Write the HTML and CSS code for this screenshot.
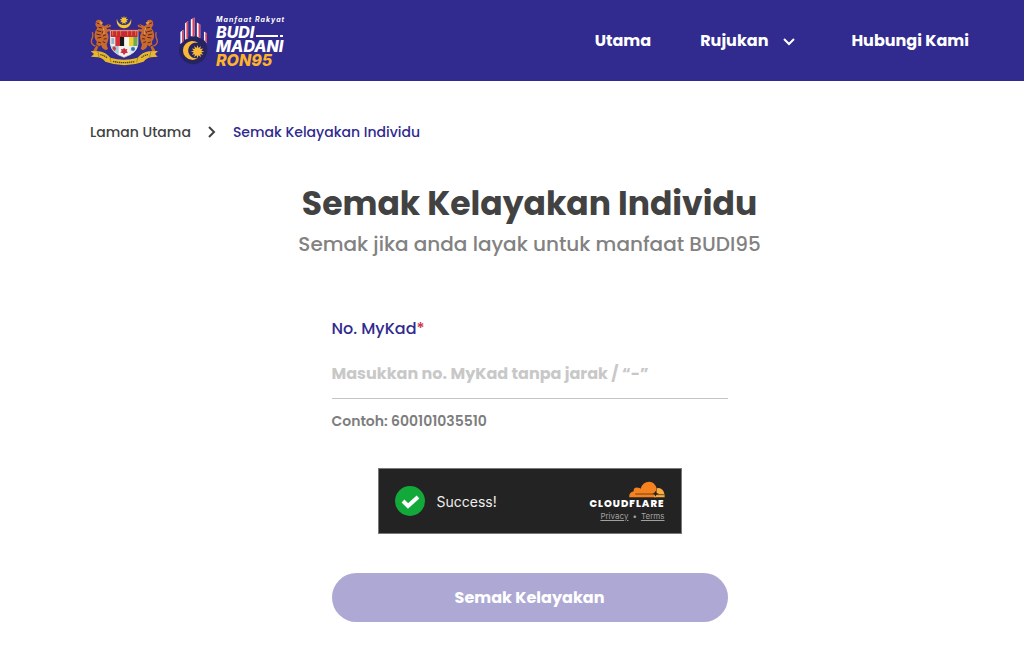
FILE: index.html
```html
<!DOCTYPE html>
<html lang="ms">
<head>
<meta charset="UTF-8">
<meta name="viewport" content="width=device-width, initial-scale=1">
<title>Semak Kelayakan Individu</title>
<link rel="stylesheet" href="styles.css">
</head>
<body>
<header class="header">
	<div class="brand">
		<svg class="jata" viewBox="30 32 207 162" role="img" aria-label="Jata Negara">
			<!-- crescent and star -->
			<path d="M111 46a22 22 0 1 0 42 0a21 19 0 1 1-42 0z" fill="#f3c62c"/>
			<path d="M132 37l2 7 6-4-2 7 7 1-6 4 4 5-6-1-1 7-4-5-5 5 0-7-7 1 5-5-6-4 7-1-2-7 6 4z" fill="#f3c62c"/>
			<!-- tigers -->
			<g id="tiger">
				<path d="M48 53l6-4 8 1 6 8-2 6 7 4 12-5 8 2-1 5-12 4 1 4 10-1 3 5-13 4q8 12 3 26l-4 12 4 13-7 4-10-7-4-9-9 7-5 14-10 1 2-8 8-12 1-13q-8-9-6-22 1-10 8-18l-6-9z" fill="#c8692f"/>
				<path d="M46 128q-15-5-11-20 6-10 2-21" stroke="#c8692f" stroke-width="4" fill="none"/>
				<path d="M50 58l8 4M56 72l12 2M50 82l14 3M49 92l13 3M52 104l12-2M70 82l-4 8M78 94l-9 4M80 106l-9 1M76 118l-8-3M54 116l9 3M50 126l6 3M88 64l-4 4" stroke="#5a211b" stroke-width="3" fill="none"/>
				<path d="M60 56l7 2-3 5zM68 72q5 8 4 20" stroke="#f0bd7c" stroke-width="2" fill="none"/>
			</g>
			<use href="#tiger" transform="matrix(-1 0 0 1 266 0)"/>
			<!-- shield -->
			<path d="M91 82h83v40q-3 27-42 40-37-13-41-40z" fill="#f4f1ed"/>
			<path d="M91 79h83v22H91z" fill="#c92735"/>
			<path d="M98 82v15M110 82v15M122 82v15M143 82v15M155 82v15M167 82v15" stroke="#d9772f" stroke-width="3"/>
			<path d="M91 101h15v27H92z" fill="#f2efe7"/>
			<path d="M94 107h9M94 113h9M94 119h9" stroke="#357ebd" stroke-width="3"/>
			<path d="M106 101h14v27h-14z" fill="#d92d36"/>
			<path d="M120 101h13v27h-13z" fill="#171817"/>
			<path d="M133 101h14v27h-14z" fill="#f6f6f0"/>
			<path d="M147 101h13v27h-13z" fill="#f2cf2b"/>
			<path d="M160 101h14l-1 27h-13z" fill="#6eaa50"/>
			<path d="M92 128h24v27q-21-11-24-27z" fill="#a7c9dd"/>
			<path d="M98 132l5-3 6 6-5 9-7-6z" fill="#c4413d"/>
			<path d="M149 128h24q-3 17-24 27z" fill="#dbe7ed"/>
			<circle cx="159" cy="137" r="6" fill="#326eb1"/>
			<path d="M132 133l4 5 6-1-2 6 4 5-7 1-5 6-4-6-7-1 4-5-2-6 6 1z" fill="#cf2a3d"/>
			<path d="M91 82h83v40q-3 27-42 40-37-13-41-40z" fill="none" stroke="#e8dcd0" stroke-width="2"/>
			<!-- motto ribbon -->
			<path d="M32 143l25 1q20 3 34 19 40 12 82 0 14-16 34-19l27-1-9 9 8 8-20 2q-14 2-22 13-58 21-115 0-8-11-22-13l-21-2 9-8z" fill="#e6b82f"/>
			<path d="M91 163l2 14M173 163l-3 14M54 145l3 16M212 145l-3 16" stroke="#8e711f" stroke-width="2"/>
			<path d="M99 174q35 8 66 0M61 154q10 1 20 9M204 154q-11 1-20 9" fill="none" stroke="#4c4325" stroke-width="4" stroke-dasharray="4 2"/>
		</svg>
		<div class="budi">
			<svg class="budi-mark" viewBox="27 36 86 142" aria-hidden="true">
				<circle cx="69" cy="134" r="42" fill="#262460"/>
				<path d="M31 80l9-6v34l-9 9zM45 54l9-6v51l-9 4zM62 43l11-6v56H62zM80 52l10 6v41l-10-5zM101 79l9 6v29l-9-10z" fill="#f4f2fa"/>
				<path d="M36 77l4-3v34l-4 4zM49 51l5-3v51l-5 2zM67 40l6-3v56h-6zM85 55l5 3v41l-5-3zM105 82l5 3v29l-5-6z" fill="#d74455"/>
				<path d="M84 113a28 28 0 1 0 0 44 23 23 0 1 1 0-44z" fill="#f9b936"/>
				<path d="M82 119l3 9 7-6-2 9 9-2-6 7 9 2-9 3 6 7-9-2 2 9-7-6-3 9-3-9-7 6 2-9-9 2 6-7-9-3 9-2-6-7 9 2-2-9 7 6z" fill="#f9b936"/>
			</svg>
			<div class="budi-text">
				<span class="tagline">Manfaat Rakyat</span>
				<span class="budi-line">BUDI<i class="dash"></i><i class="dot"></i></span>
				<span class="budi-line">MADANI</span>
				<span class="budi-line ron">RON95</span>
			</div>
		</div>
	</div>
	<nav class="nav">
		<a href="#">Utama</a>
		<button type="button" class="nav-drop">Rujukan
			<svg class="chevron" viewBox="0 0 14 14" aria-hidden="true"><path d="M2 5l5 5 5-5"/></svg>
		</button>
		<a href="#">Hubungi Kami</a>
	</nav>
</header>

<main class="content">
	<nav class="breadcrumb" aria-label="Breadcrumb">
		<a href="#">Laman Utama</a>
		<svg class="separator" viewBox="0 0 10 14" aria-hidden="true"><path d="M2 2l5 5-5 5"/></svg>
		<a href="#" class="current">Semak Kelayakan Individu</a>
	</nav>

	<h1>Semak Kelayakan Individu</h1>
	<p class="subtitle">Semak jika anda layak untuk manfaat BUDI95</p>

	<form class="check-form">
		<label for="mykad">No. MyKad<span class="required">*</span></label>
		<input type="text" id="mykad" placeholder="Masukkan no. MyKad tanpa jarak / “-”">
		<p class="hint">Contoh: 600101035510</p>

		<div class="turnstile">
			<svg class="tick" viewBox="0 0 30 30" aria-hidden="true">
				<circle cx="15" cy="15" r="15" fill="#13a83a"/>
				<path d="M8 15l5 5 10-9" fill="none" stroke="#fff" stroke-width="4"/>
			</svg>
			<span class="status">Success!</span>
			<div class="cloudflare">
				<svg class="cloud" viewBox="0 0 108 49" aria-hidden="true">
					<path d="M1 48q-2-15 13-18-1-13 13-11 6 0 8 3Q41 1 61 1q16 1 22 20l-2 27z" fill="#f6821f"/>
					<path d="M84 21q9-3 16 4 7 7 7 23H75l1-8 7-4z" fill="#fbad41"/>
					<path d="M19 38h53q6-1 8-8M77 40h28" fill="none" stroke="#232323" stroke-width="2"/>
					<path d="M80 28l2 7 8 2-8 3-3 6-2-6-7-2 7-3z" fill="#232323"/>
				</svg>
				<span class="cf-name">CLOUDFLARE</span>
				<div class="cf-links"><a href="#">Privacy</a><span>•</span><a href="#">Terms</a></div>
			</div>
		</div>

		<button type="submit" class="submit" disabled>Semak Kelayakan</button>
	</form>
</main>
</body>
</html>
```
FILE: styles.css
```css
* {
	box-sizing: border-box;
}
body {
	margin: 0;
	background: #fff;
	color: #424242;
	font-family: Poppins, Inter, "Liberation Sans", sans-serif;
}
a {
	color: inherit;
	text-decoration: none;
}
svg {
	display: block;
	flex-shrink: 0;
}

/* header */
.header {
	display: flex;
	justify-content: space-between;
	align-items: center;
	min-height: 81px;
	padding: 0 55px 0 90px;
	background: #312a8f;
	color: #fff;
}
.brand {
	display: flex;
	align-items: center;
	gap: 20px;
}
.jata {
	width: 69px;
	height: 54px;
}
.budi {
	display: flex;
	align-items: center;
	gap: 8px;
}
.budi-mark {
	width: 29px;
	height: 48px;
}
.budi-text {
	display: flex;
	flex-direction: column;
	font-family: Inter, "Liberation Sans", sans-serif;
	font-style: italic;
	font-weight: 800;
}
.tagline {
	font-size: 7px;
	line-height: 10px;
	letter-spacing: 1px;
	font-weight: 700;
}
.budi-line {
	display: flex;
	align-items: flex-end;
	gap: 2px;
	font-size: 16px;
	line-height: 14px;
}
.ron {
	color: #fdb32b;
}
.dash {
	width: 22px;
	height: 2px;
	margin-bottom: 2px;
	background: #fff;
}
.dot {
	width: 3px;
	height: 2px;
	margin-bottom: 2px;
	background: #fff;
}
.nav {
	display: flex;
	align-items: center;
	gap: 49px;
	font-size: 16px;
	line-height: 24px;
	font-weight: 700;
}
.nav-drop {
	display: flex;
	align-items: center;
	gap: 14px;
	padding: 0 6px 0 0;
	border: 0;
	background: none;
	color: inherit;
	font: inherit;
}
.chevron {
	width: 14px;
	height: 14px;
}
.chevron path,
.separator path {
	fill: none;
	stroke: currentColor;
	stroke-width: 2;
}

/* content */
.content {
	padding: 40px 55px 31px 90px;
}
.breadcrumb {
	display: flex;
	align-items: center;
	gap: 16px;
	font-size: 14px;
	line-height: 22px;
	font-weight: 500;
}
.separator {
	width: 10px;
	height: 14px;
}
.current {
	color: #312a8f;
}
h1 {
	margin: 37px 0 0;
	font-size: 33px;
	line-height: 48px;
	font-weight: 700;
	text-align: center;
}
.subtitle {
	margin: 0;
	color: #828282;
	font-size: 20px;
	line-height: 32px;
	font-weight: 500;
	text-align: center;
}

/* form */
.check-form {
	display: flex;
	flex-direction: column;
	max-width: 396px;
	margin: 57px auto 0;
}
.check-form label {
	color: #312a8f;
	font-size: 16px;
	line-height: 24px;
	font-weight: 500;
}
.required {
	color: #d0324f;
}
.check-form input {
	width: 100%;
	height: 58px;
	padding: 8px 0 0;
	border: 0;
	border-bottom: 1px solid #c4c4c4;
	background: none;
	color: #424242;
	font: inherit;
	font-size: 16px;
	font-weight: 700;
}
.check-form input::placeholder {
	color: #c8c8c8;
	opacity: 1;
}
.hint {
	margin: 11px 0 0;
	color: #7d7d7d;
	font-size: 14px;
	line-height: 22px;
	font-weight: 600;
}
.turnstile {
	display: flex;
	align-items: center;
	align-self: center;
	gap: 12px;
	width: 304px;
	max-width: 100%;
	height: 66px;
	margin-top: 36px;
	padding: 0 16px;
	border: 1px solid #797979;
	background: #232323;
	color: #eee;
	font-family: Inter, sans-serif;
}
.tick {
	width: 30px;
	height: 30px;
}
.status {
	font-size: 14px;
}
.cloudflare {
	display: flex;
	flex-direction: column;
	align-items: flex-end;
	margin-left: auto;
}
.cloud {
	width: 36px;
	height: 17px;
}
.cf-name {
	font-family: Poppins, Inter, sans-serif;
	font-size: 10px;
	line-height: 12px;
	font-weight: 800;
	letter-spacing: 1px;
	color: #fff;
}
.cf-links {
	display: flex;
	gap: 4px;
	color: #a0a0a0;
	font-size: 8px;
	line-height: 12px;
}
.cf-links a {
	text-decoration: underline;
}
.submit {
	height: 49px;
	margin-top: 39px;
	border: 0;
	border-radius: 25px;
	background: #aea9d4;
	color: #fff;
	font: inherit;
	font-size: 16px;
	font-weight: 700;
}
```
